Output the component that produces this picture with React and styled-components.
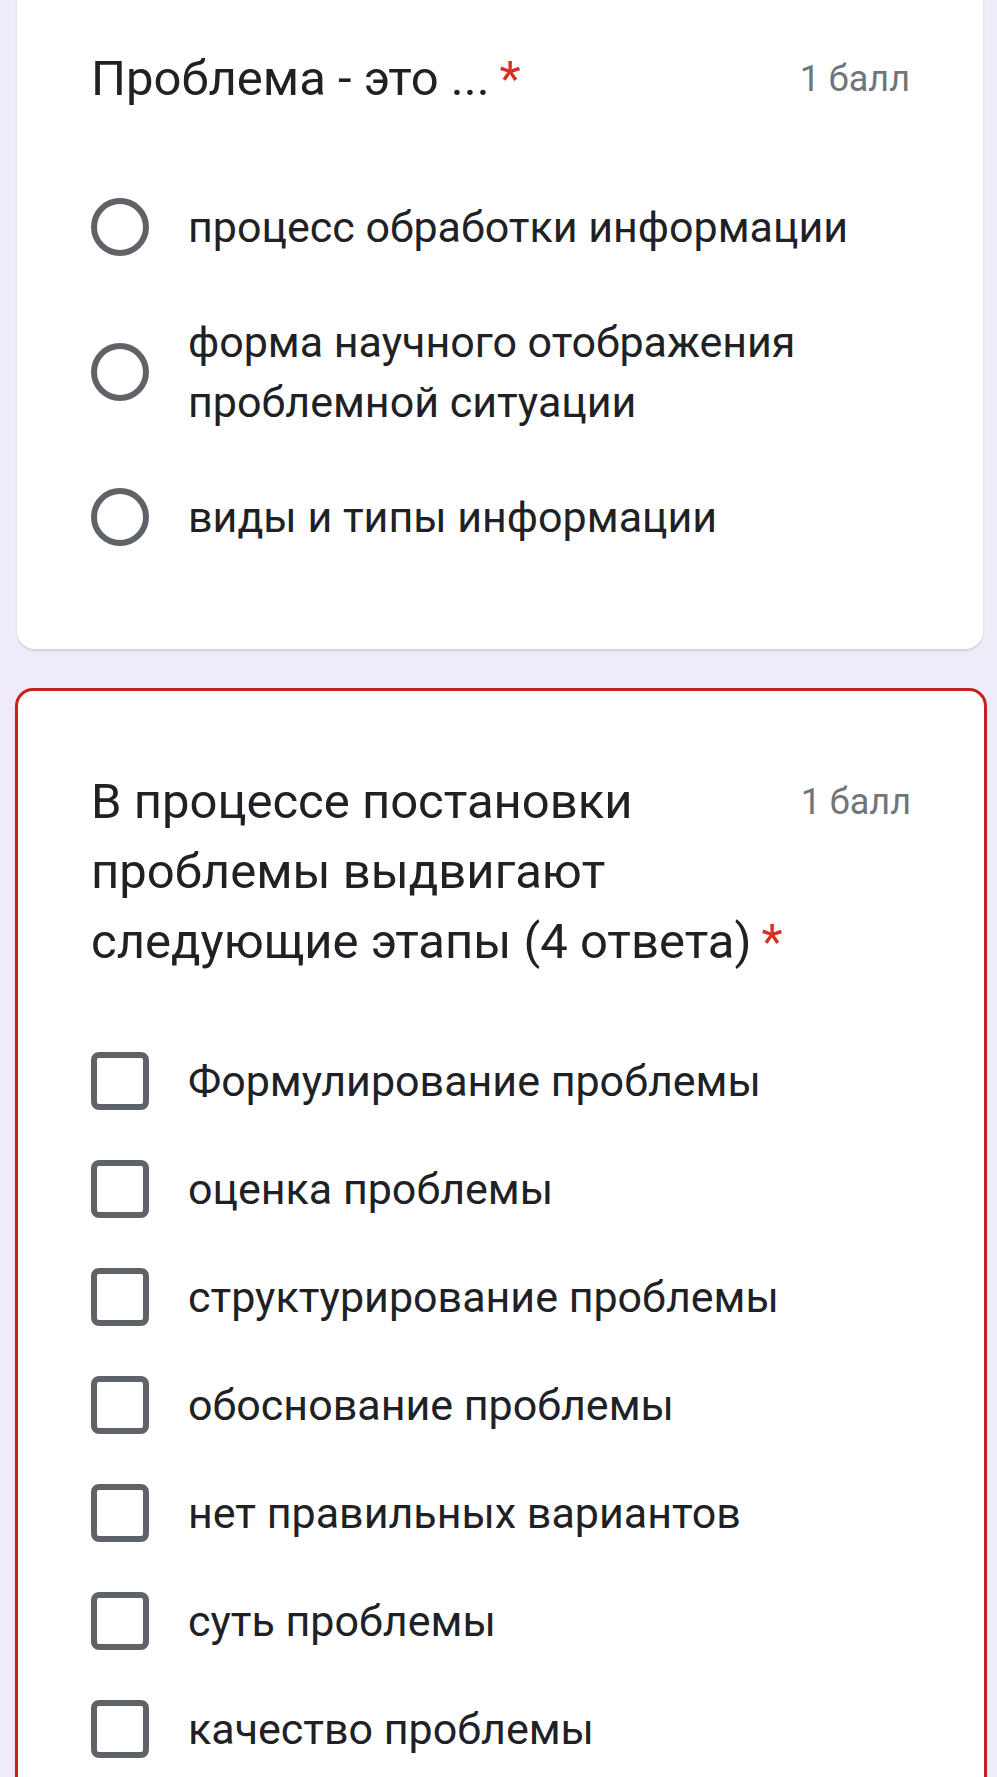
import React from "react";
import styled, { createGlobalStyle } from "styled-components";

const GlobalStyle = createGlobalStyle`
  html, body {
    margin: 0;
    padding: 0;
    background: #f0ebf8;
    overflow: hidden;
  }
  body {
    font-family: Roboto, "Liberation Sans", Arial, sans-serif;
    color: #202124;
  }
`;

const Page = styled.div`
  display: flex;
  flex-direction: column;
  gap: 39px;
  padding: 0 10px 0 15px;
  height: 1777px;
`;

const Card = styled.section`
  background: #fff;
  border-radius: 18px;
  box-sizing: border-box;
  box-shadow: 0 2px 2px rgba(60, 64, 67, 0.15);
  margin-top: ${(p) => p.$offset || 0}px;
  margin-left: ${(p) => (p.$error ? 0 : 2)}px;
  width: ${(p) => (p.$error ? 972 : 966)}px;
  border: ${(p) => (p.$error ? "3px solid #c5221f" : "none")};
  padding: ${(p) =>
    p.$error ? "76px 73px 140px 73px" : "78px 73px 102px 74px"};
  flex-shrink: 0;
`;

const Header = styled.div`
  display: flex;
  align-items: flex-start;
  justify-content: space-between;
  gap: 8px;
`;

const Title = styled.h2`
  flex: 1;
  min-width: 0;
  margin: 0;
  font-family: Roboto, "Open Sans", sans-serif;
  font-weight: 400;
  font-size: 49px;
  line-height: 70px;
  color: #202124;
`;

const Keep = styled.span`
  white-space: nowrap;
`;

const Required = styled.span`
  color: #d93025;
  margin-left: 10px;
`;

const Points = styled.span`
  flex: none;
  font-size: 36px;
  line-height: 70px;
  color: #70757a;
  white-space: nowrap;
`;

const Options = styled.div`
  display: flex;
  flex-direction: column;
  gap: ${(p) => p.$gap}px;
  margin-top: ${(p) => p.$top}px;
`;

const Option = styled.label`
  display: flex;
  align-items: center;
  gap: 39px;
`;

const Radio = styled.span`
  flex: none;
  width: 58px;
  height: 58px;
  box-sizing: border-box;
  border: 6px solid #5f6368;
  border-radius: 50%;
`;

const Check = styled.span`
  flex: none;
  width: 58px;
  height: 58px;
  box-sizing: border-box;
  border: 6px solid #5f6368;
  border-radius: 8px;
`;

const OptionText = styled.span`
  font-size: 43px;
  line-height: 60px;
  color: #202124;
`;

const firstOptions = [
  "процесс обработки информации",
  "форма научного отображения проблемной ситуации",
  "виды и типы информации",
];

const secondOptions = [
  "Формулирование проблемы",
  "оценка проблемы",
  "структурирование проблемы",
  "обоснование проблемы",
  "нет правильных вариантов",
  "суть проблемы",
  "качество проблемы",
];

export default function App() {
  return (
    <>
      <GlobalStyle />
      <Page>
        <Card $offset={-34}>
          <Header>
            <Title>
              Проблема - это ...<Required>*</Required>
            </Title>
            <Points>1 балл</Points>
          </Header>
          <Options $top={83} $gap={55}>
            {firstOptions.map((text) => (
              <Option key={text}>
                <Radio />
                <OptionText>{text}</OptionText>
              </Option>
            ))}
          </Options>
        </Card>

        <Card $error>
          <Header>
            <Title>
              В процессе постановки проблемы выдвигают следующие этапы{" "}
              <Keep>
                (4 ответа)<Required>*</Required>
              </Keep>
            </Title>
            <Points>1 балл</Points>
          </Header>
          <Options $top={74} $gap={48}>
            {secondOptions.map((text) => (
              <Option key={text}>
                <Check />
                <OptionText>{text}</OptionText>
              </Option>
            ))}
          </Options>
        </Card>
      </Page>
    </>
  );
}
